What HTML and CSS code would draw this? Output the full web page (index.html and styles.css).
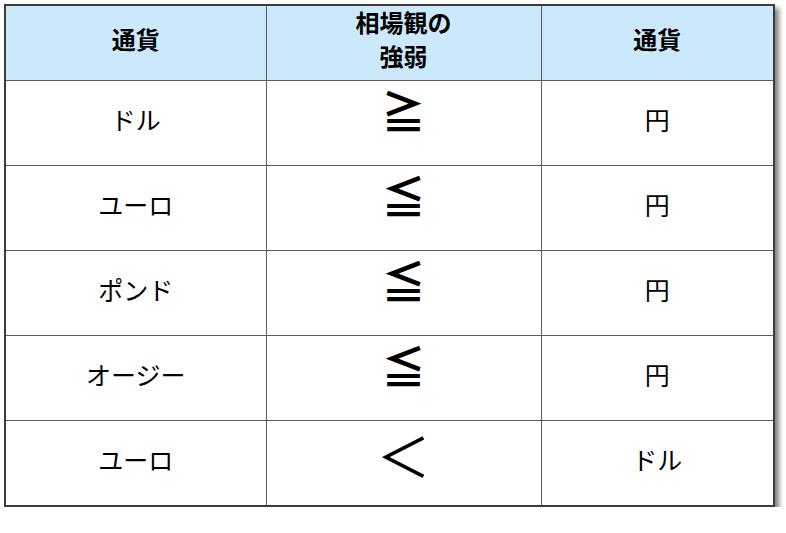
FILE: index.html
```html
<!DOCTYPE html>
<html lang="ja">
<head>
<meta charset="utf-8">
<link rel="stylesheet" href="styles.css">
</head>
<body>
<table class="fx">
  <colgroup>
    <col class="c1"><col class="c2"><col class="c3">
  </colgroup>
  <thead>
    <tr>
      <th><div class="hc">通貨</div></th>
      <th><div class="hc">相場観の<br>強弱</div></th>
      <th><div class="hc">通貨</div></th>
    </tr>
  </thead>
  <tbody>
    <tr><td><div class="bc">ドル</div></td><td><div class="bc sym">≧</div></td><td><div class="bc">円</div></td></tr>
    <tr><td><div class="bc">ユーロ</div></td><td><div class="bc sym">≦</div></td><td><div class="bc">円</div></td></tr>
    <tr><td><div class="bc">ポンド</div></td><td><div class="bc sym">≦</div></td><td><div class="bc">円</div></td></tr>
    <tr><td><div class="bc">オージー</div></td><td><div class="bc sym">≦</div></td><td><div class="bc">円</div></td></tr>
    <tr><td><div class="bc">ユーロ</div></td><td><div class="bc sym lt">＜</div></td><td><div class="bc">ドル</div></td></tr>
  </tbody>
</table>
</body>
</html>
```
FILE: styles.css
```css
html, body {
  margin: 0;
  padding: 0;
  background: #ffffff;
}
body {
  padding: 4px 0 0 4px;
  font-family: "Noto Sans CJK JP", "Noto Sans", sans-serif;
  color: #000;
}
.fx {
  border-collapse: collapse;
  width: 769px;
  table-layout: fixed;
  border: 2px solid #3c3c3c;
  box-shadow: 4px 4px 5px rgba(0, 0, 0, 0.5);
}
.c1 { width: 261px; }
.c2 { width: 275px; }
.c3 { width: 233px; }
.fx th, .fx td {
  border: 1px solid #5c5c5c;
  text-align: center;
  vertical-align: middle;
  padding: 0;
  line-height: 0;
}
.fx th {
  background: #cce9fc;
}
.hc {
  height: 74px;
  box-sizing: border-box;
  padding-bottom: 8px;
  display: flex;
  flex-direction: column;
  justify-content: center;
  font-size: 24px;
  font-weight: bold;
  line-height: 34px;
  overflow: visible;
}
.bc {
  height: 84px;
  box-sizing: border-box;
  padding-bottom: 9px;
  display: flex;
  align-items: center;
  justify-content: center;
  font-size: 25px;
  line-height: 30px;
  overflow: visible;
}
.sym {
  font-size: 44px;
  line-height: 44px;
  padding-bottom: 26px;
  font-weight: bold;
}
.sym.lt {
  font-size: 54px;
  line-height: 54px;
  font-weight: normal;
  padding-bottom: 16px;
}
```
